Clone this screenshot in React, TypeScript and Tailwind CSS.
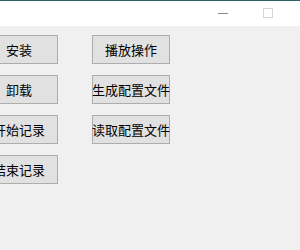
const font = { fontFamily: '"Noto Sans CJK SC", "Liberation Sans", sans-serif' };

function WinButton({ label }: { label: string }) {
  return (
    <button className="w-[78px] h-[29px] shrink-0 bg-[#e1e1e1] border border-[#adadad] text-[13px] leading-none text-black flex items-center justify-center whitespace-nowrap">
      {label}
    </button>
  );
}

export default function App() {
  return (
    <div className="w-[300px] h-[250px] overflow-hidden bg-[#f0f0f0] flex flex-col" style={font}>
      {/* Title bar */}
      <div className="h-[26px] shrink-0 bg-white border-t border-[#2f5f66] relative">
        <div className="absolute left-[218px] top-[12px] w-[10px] h-px bg-[#8a8a8a]" />
        <div className="absolute left-[263px] top-[7px] w-[10px] h-[10px] border border-[#d4d4d4]" />
      </div>

      {/* Body */}
      <div className="flex gap-[34px] pt-[9px] -ml-[20px]">
        <div className="flex flex-col gap-[11px]">
          <WinButton label="安装" />
          <WinButton label="卸载" />
          <WinButton label="开始记录" />
          <WinButton label="结束记录" />
        </div>
        <div className="flex flex-col gap-[11px]">
          <WinButton label="播放操作" />
          <WinButton label="生成配置文件" />
          <WinButton label="读取配置文件" />
        </div>
      </div>
    </div>
  );
}
